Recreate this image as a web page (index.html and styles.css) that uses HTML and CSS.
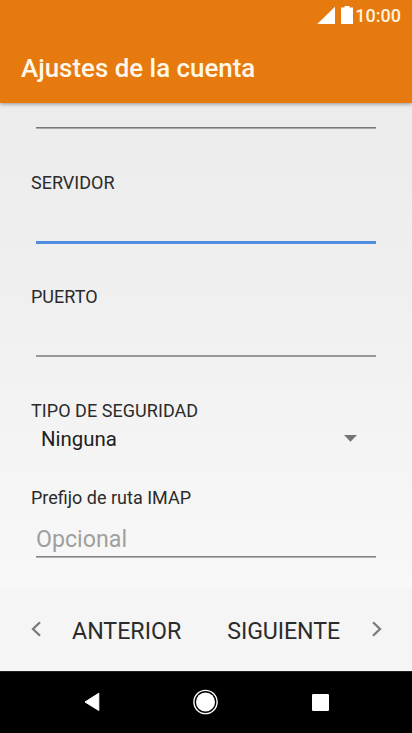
FILE: index.html
```html
<!DOCTYPE html>
<html lang="es">
<head>
<meta charset="utf-8">
<meta name="viewport" content="width=device-width, initial-scale=1">
<title>Ajustes de la cuenta</title>
<link rel="stylesheet" href="styles.css">
</head>
<body>
<div class="screen">
  <header class="header">
    <div class="status">
      <svg class="status-icons" width="38" height="20" viewBox="0 0 38 20" fill="#fff"><path d="M18 0.7V18H0.2Z"/><path d="M27.5 0h5v1.5H36V18H24V1.5h3.5Z"/></svg>
      <span class="clock">10:00</span>
    </div>
    <h1 class="title">Ajustes de la cuenta</h1>
  </header>
  <main class="form">
    <div class="field first"></div>
    <div class="field focused"><label class="label">SERVIDOR</label></div>
    <div class="field port"><label class="label">PUERTO</label></div>
    <div class="select">
      <label class="label security">TIPO DE SEGURIDAD</label>
      <div class="select-value"><span class="value">Ninguna</span><svg width="13" height="7" viewBox="0 0 13 7"><path d="M0 0H13L6.5 6.7Z" fill="#747474"/></svg></div>
    </div>
    <div class="prefix"><label class="label imap">Prefijo de ruta IMAP</label><div class="hint"><span class="hint-text">Opcional</span></div></div>
  </main>
  <footer class="footer">
    <div class="action prev"><svg width="10" height="16" viewBox="0 0 10 16"><path d="M9 1.2L2 8L9 14.8" fill="none" stroke="#7b7b7b" stroke-width="2.3"/></svg><span class="prev-text">ANTERIOR</span></div>
    <div class="action next"><span class="next-text">SIGUIENTE</span><svg width="10" height="16" viewBox="0 0 10 16"><path d="M1 1.2L8 8L1 14.8" fill="none" stroke="#7b7b7b" stroke-width="2.3"/></svg></div>
  </footer>
  <nav class="nav">
    <svg width="16" height="20" viewBox="0 0 16 20"><path d="M14.8 1.2V18.5L1 10Z" fill="#fff" stroke="#fff" stroke-linejoin="round"/></svg>
    <svg width="26" height="26" viewBox="0 0 26 26"><circle cx="12.5" cy="13" r="11.6" fill="none" stroke="#fff" stroke-width="1.4"/><circle cx="12.5" cy="13" r="9.5" fill="#fff"/></svg>
    <svg width="17" height="17" viewBox="0 0 17 17"><rect width="17" height="17" rx="1.3" fill="#fff"/></svg>
  </nav>
</div>
</body>
</html>
```
FILE: styles.css
```css
* { box-sizing: border-box; }
body { margin: 0; font-family: Roboto, sans-serif; color: #2b2b2b; }
svg { display: block; flex: none; }
.screen { width: 412px; height: 733px; display: flex; flex-direction: column; overflow: hidden; }
.header { height: 103px; flex: none; background: #e67a0e; color: #fff; box-shadow: 0 1px 4px rgba(0, 0, 0, .4); z-index: 1; }
.status { height: 32px; display: flex; align-items: center; justify-content: flex-end; padding: 0 11px 1px 0; }
.clock { font-size: 18px; font-weight: 500; line-height: 32px; color: #fff2dd; }
.title { margin: 0; padding: 1px 0 0 21px; font-size: 25.9px; font-weight: 500; line-height: 71px; color: #fff7e8; white-space: nowrap; }
.form { height: 485px; flex: none; padding: 0 36px; background: linear-gradient(#ececec, #efefef 35%, #f8f8f8); }
.field { border-bottom: 2px solid #999; }
.label { display: block; margin-left: -5px; font-size: 18px; line-height: 20px; white-space: nowrap; }
.first { height: 25px; margin-bottom: 1px; border-bottom: 1px solid #777; box-shadow: 0 1px #aaa; }
.focused { height: 115px; padding-top: 44px; border-bottom: 3px solid #4f8de3; }
.port { height: 113px; padding-top: 43px; }
.select { padding-top: 44px; }
.select-value { height: 35px; display: flex; align-items: center; justify-content: space-between; padding: 0 19px 0 5px; }
.value { padding-top: 2px; font-size: 20.4px; line-height: 35px; color: #202020; }
.prefix { padding-top: 32px; }
.hint { height: 49px; padding-top: 16px; border-bottom: 1px solid #858585; box-shadow: 0 1px #b0b0b0; }
.hint-text { display: block; font-size: 23.2px; line-height: 30px; color: #9f9f9f; }
.security { letter-spacing: .05px; }
.footer { height: 83px; flex: none; display: flex; justify-content: space-between; padding: 0 30px 0 31px; background: #f5f5f5; font-size: 23.2px; line-height: 28px; }
.action { display: flex; align-items: center; }
.action span { padding-top: 2px; }
.action svg { margin-bottom: 1px; }
.prev { gap: 31px; }
.next { gap: 32px; }
.next-text { letter-spacing: -.1px; }
.nav { height: 62px; flex: none; display: grid; grid-template-columns: 115px 113px 117px; justify-content: center; align-items: center; justify-items: center; padding: 0 0 1px 1px; background: #000; border-top: 1px solid #222; }
```
